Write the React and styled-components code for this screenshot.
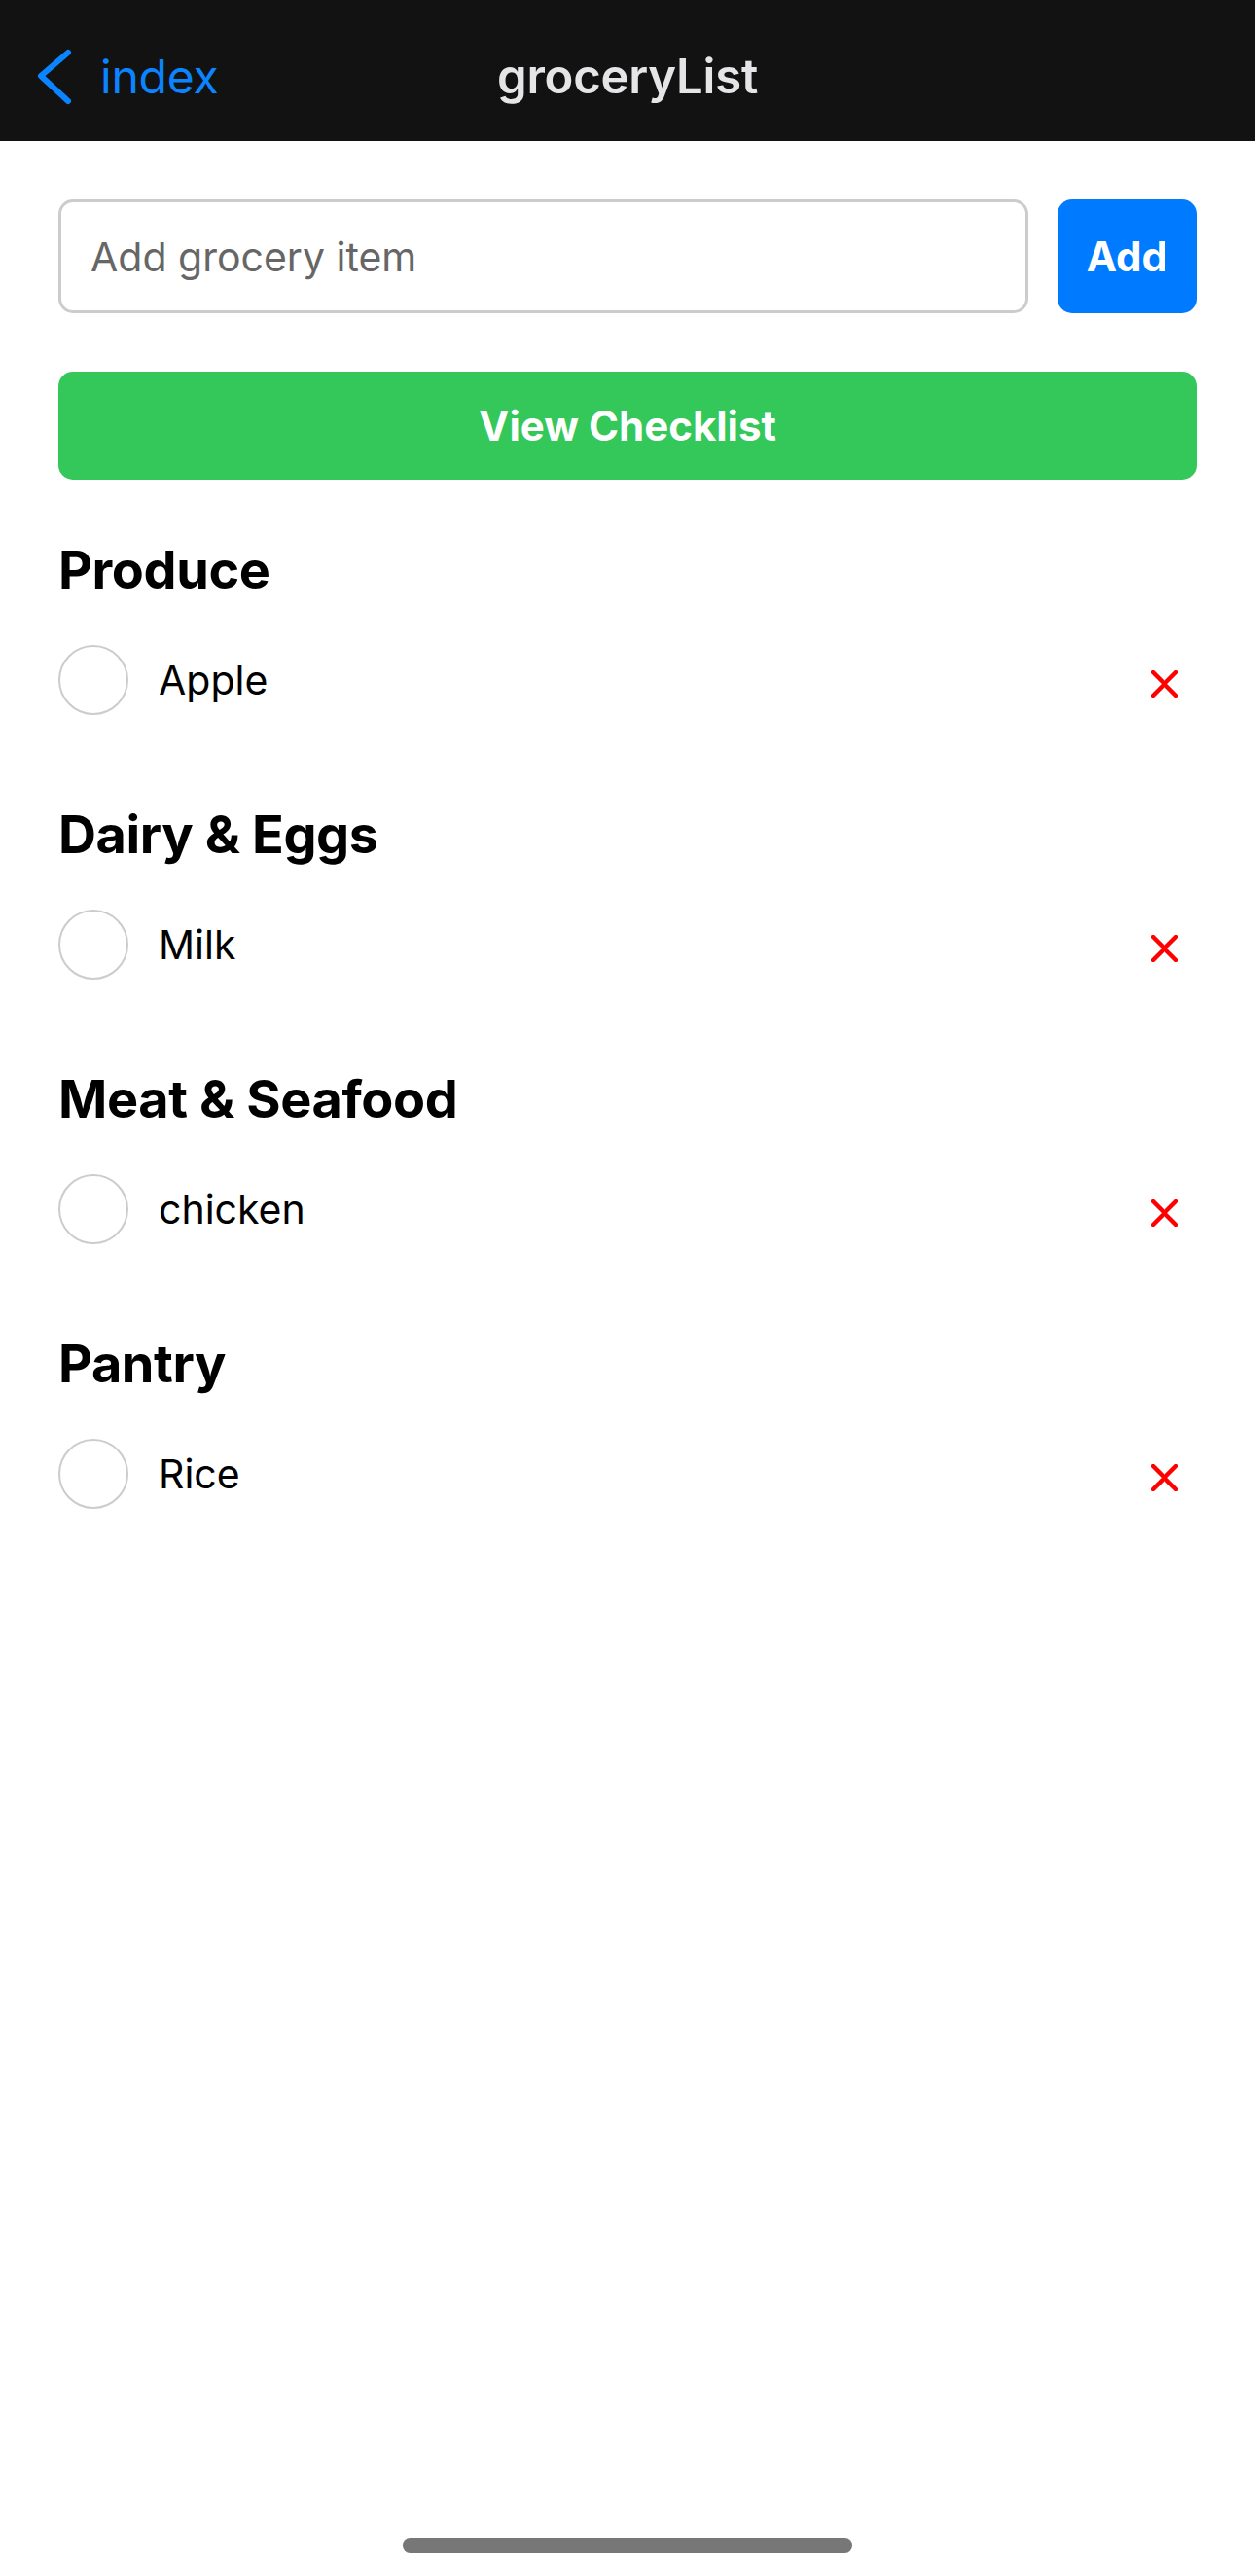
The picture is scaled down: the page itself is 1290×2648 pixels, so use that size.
import React from "react";
import styled, { createGlobalStyle } from "styled-components";

const Global = createGlobalStyle`
  html, body { margin: 0; padding: 0; background: #ffffff; }
  body { font-family: "Inter", "Liberation Sans", sans-serif; -webkit-font-smoothing: antialiased; }
  * { box-sizing: border-box; }
`;

const Page = styled.div`
  width: 1290px;
  min-height: 2648px;
  display: flex;
  flex-direction: column;
  background: #ffffff;
`;

const NavBar = styled.header`
  height: 145px;
  padding-top: 12px;
  background: #121212;
  display: grid;
  grid-template-columns: 1fr auto 1fr;
  align-items: center;
`;

const BackButton = styled.button`
  display: flex;
  align-items: center;
  gap: 26px;
  justify-self: start;
  margin-left: 37px;
  padding: 0;
  border: 0;
  background: transparent;
  color: #0a84ff;
  font-family: "Inter", "Liberation Sans", sans-serif;
  font-size: 48px;
  font-weight: 400;
  letter-spacing: -0.2px;
  cursor: pointer;
`;

const Title = styled.h1`
  margin: 0;
  color: #e5e5e7;
  font-size: 49px;
  font-weight: 600;
  letter-spacing: -0.2px;
`;

const Content = styled.main`
  padding: 60px 60px 0;
  display: flex;
  flex-direction: column;
  gap: 60px;
`;

const InputRow = styled.div`
  display: flex;
  gap: 30px;
  height: 117px;
`;

const TextInput = styled.input`
  flex: 1;
  height: 100%;
  border: 3px solid #cccccc;
  border-radius: 15px;
  padding: 0 30px;
  font-family: "Inter", "Liberation Sans", sans-serif;
  font-size: 41px;
  color: #000;
  outline: none;
  &::placeholder { color: #666666; }
`;

const SolidButton = styled.button`
  border: 0;
  border-radius: 15px;
  background: ${(p) => p.$color};
  color: #ffffff;
  font-family: "Inter", "Liberation Sans", sans-serif;
  font-size: 42px;
  font-weight: 700;
  padding: 0 30px;
  height: ${(p) => p.$height}px;
  cursor: pointer;
`;

const Section = styled.section`
  display: flex;
  flex-direction: column;
`;

const SectionTitle = styled.h2`
  margin: 0 0 14px;
  line-height: 66px;
  font-size: 54px;
  font-weight: 700;
  letter-spacing: -0.4px;
  color: #000;
`;

const ItemRow = styled.div`
  display: flex;
  align-items: center;
  padding: 30px 0;
`;

const Check = styled.span`
  width: 72px;
  height: 72px;
  border-radius: 50%;
  border: 2.5px solid #cccccc;
  margin-right: 31px;
  flex-shrink: 0;
`;

const ItemName = styled.span`
  flex: 1;
  font-size: 41px;
  color: #000;
`;

const DeleteButton = styled.button`
  border: 0;
  background: transparent;
  padding: 0;
  margin: 8px 19px 0 0;
  display: flex;
  cursor: pointer;
`;

const HomeIndicator = styled.div`
  margin: auto auto 24px;
  width: 462px;
  height: 15px;
  border-radius: 8px;
  background: #777777;
`;

const groups = [
  { name: "Produce", items: ["Apple"] },
  { name: "Dairy & Eggs", items: ["Milk"] },
  { name: "Meat & Seafood", items: ["chicken"] },
  { name: "Pantry", items: ["Rice"] },
];

const Chevron = () => (
  <svg width="40" height="62" viewBox="0 0 40 62" fill="none">
    <polyline points="33,6 5,30 33,56" stroke="#0a84ff" strokeWidth="6" strokeLinecap="round" strokeLinejoin="round" />
  </svg>
);

const Cross = () => (
  <svg width="28" height="28" viewBox="0 0 28 28">
    <path d="M2 2 L26 26 M26 2 L2 26" stroke="#ff0000" strokeWidth="4.5" strokeLinecap="round" />
  </svg>
);

export default function App() {
  return (
    <Page>
      <Global />
      <NavBar>
        <BackButton>
          <Chevron />
          index
        </BackButton>
        <Title>groceryList</Title>
        <div />
      </NavBar>
      <Content>
        <InputRow>
          <TextInput placeholder="Add grocery item" />
          <SolidButton $color="#007aff" $height={117}>Add</SolidButton>
        </InputRow>
        <SolidButton $color="#34c759" $height={111}>View Checklist</SolidButton>
        {groups.map((g) => (
          <Section key={g.name}>
            <SectionTitle>{g.name}</SectionTitle>
            {g.items.map((it) => (
              <ItemRow key={it}>
                <Check />
                <ItemName>{it}</ItemName>
                <DeleteButton aria-label="delete">
                  <Cross />
                </DeleteButton>
              </ItemRow>
            ))}
          </Section>
        ))}
      </Content>
      <HomeIndicator />
    </Page>
  );
}
